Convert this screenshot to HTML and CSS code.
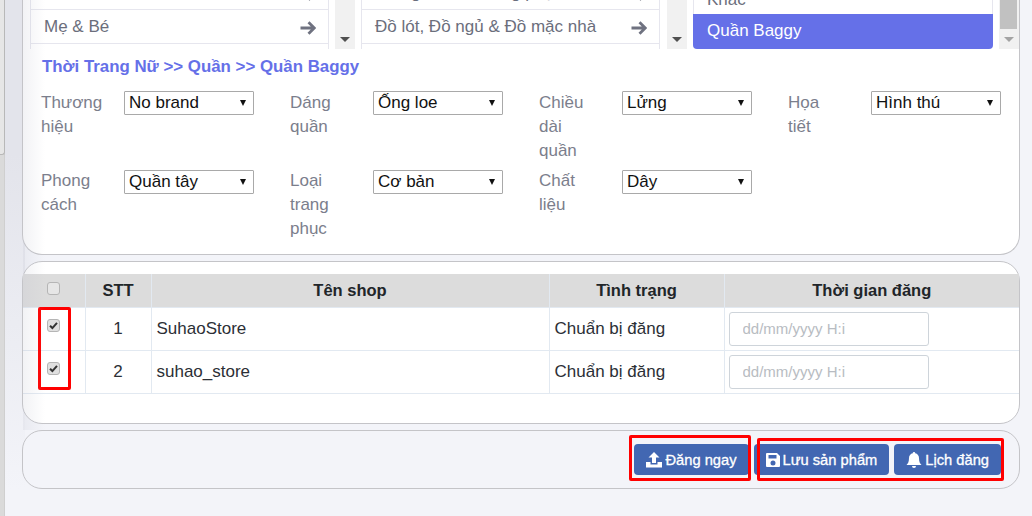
FILE: index.html
```html
<!DOCTYPE html>
<html lang="en">
<head>
    <meta charset="UTF-8">
    <meta name="viewport" content="width=device-width, initial-scale=1.0">
    <title>Đăng sản phẩm</title>
    <link rel="stylesheet" href="styles.css">
</head>
<body>
    <div class="side-strip"><div class="side-strip-top"></div></div>
    <div class="side-gap"></div>
    <div class="page">
        <!-- Category picker and attributes -->
        <section class="card card-top">
            <div class="pickers">
                <div class="picker">
                    <ul class="cat-list">
                        <li class="cat-item cat-cut"><span>Nhà cửa</span><svg class="arrow" viewBox="0 0 16 14"><path d="M.5 7H14M8.500 1.200L14.300 7l-5.800 5.800"/></svg></li>
                        <li class="cat-item"><span>Mẹ &amp; Bé</span><svg class="arrow" viewBox="0 0 16 14"><path d="M.5 7H14M8.500 1.200L14.300 7l-5.800 5.800"/></svg></li>
                        <li class="cat-item cat-last"></li>
                    </ul>
                    <div class="scroll"><i class="scroll-down"></i></div>
                </div>
                <div class="picker picker-mid">
                    <ul class="cat-list">
                        <li class="cat-item cat-cut"><span>Đồ ngủ &amp; Đồ Trang phục</span><svg class="arrow" viewBox="0 0 16 14"><path d="M.5 7H14M8.500 1.200L14.300 7l-5.800 5.800"/></svg></li>
                        <li class="cat-item"><span>Đồ lót, Đồ ngủ &amp; Đồ mặc nhà</span><svg class="arrow" viewBox="0 0 16 14"><path d="M.5 7H14M8.500 1.200L14.300 7l-5.800 5.800"/></svg></li>
                        <li class="cat-item cat-last"></li>
                    </ul>
                    <div class="scroll"><i class="scroll-down"></i></div>
                </div>
                <div class="picker picker-last">
                    <ul class="cat-list">
                        <li class="cat-plain">Khác</li>
                        <li class="cat-active">Quần Baggy</li>
                    </ul>
                    <div class="scroll scroll-thumb"><b></b><i class="scroll-down"></i></div>
                </div>
            </div>

            <h3 class="crumb">Thời Trang Nữ &gt;&gt; Quần &gt;&gt; Quần Baggy</h3>

            <div class="attrs">
                <div class="attr">
                    <label>Thương hiệu</label>
                    <div class="fake-select">No brand</div>
                </div>
                <div class="attr">
                    <label>Dáng quần</label>
                    <div class="fake-select">Ống loe</div>
                </div>
                <div class="attr">
                    <label>Chiều dài quần</label>
                    <div class="fake-select">Lửng</div>
                </div>
                <div class="attr">
                    <label>Họa tiết</label>
                    <div class="fake-select">Hình thú</div>
                </div>
                <div class="attr attr-low">
                    <label>Phong cách</label>
                    <div class="fake-select">Quần tây</div>
                </div>
                <div class="attr attr-low">
                    <label>Loại trang phục</label>
                    <div class="fake-select">Cơ bản</div>
                </div>
                <div class="attr attr-low">
                    <label>Chất liệu</label>
                    <div class="fake-select">Dây</div>
                </div>
            </div>
        </section>

        <!-- Shop table -->
        <section class="card card-table">
            <table class="shops">
                <thead>
                    <tr>
                        <th class="col-check"><span class="check"></span></th>
                        <th class="col-stt">STT</th>
                        <th class="col-name">Tên shop</th>
                        <th class="col-status">Tình trạng</th>
                        <th>Thời gian đăng</th>
                    </tr>
                </thead>
                <tbody>
                    <tr>
                        <td class="center"><span class="check checked"><svg viewBox="0 0 12 12"><path d="M2.200 6.200l2.600 2.600 5-5.600"/></svg></span></td>
                        <td class="center">1</td>
                        <td>SuhaoStore</td>
                        <td>Chuẩn bị đăng</td>
                        <td><input class="time-input" type="text" placeholder="dd/mm/yyyy H:i"></td>
                    </tr>
                    <tr>
                        <td class="center"><span class="check checked"><svg viewBox="0 0 12 12"><path d="M2.200 6.200l2.600 2.600 5-5.600"/></svg></span></td>
                        <td class="center">2</td>
                        <td>suhao_store</td>
                        <td>Chuẩn bị đăng</td>
                        <td><input class="time-input" type="text" placeholder="dd/mm/yyyy H:i"></td>
                    </tr>
                </tbody>
            </table>
            <div class="mark mark-checks"></div>
        </section>

        <!-- Actions -->
        <section class="card card-actions">
            <button class="btn btn-post">
                <svg class="icon" viewBox="0 0 16 16"><path d="M8 0l5.500 5.500H10V11H6V5.500H2.500zM0 10h4.500v2.500h7V10H16v5.500H0z"/></svg>Đăng ngay
            </button>
            <button class="btn btn-save">
                <svg class="icon" viewBox="1 1 14 14"><path d="M2 1h10l3 3v10a1 1 0 0 1-1 1H2a1 1 0 0 1-1-1V2a1 1 0 0 1 1-1zm1.500 2v3.500h8V3zM8 8.500a2.500 2.500 0 1 0 0 5 2.500 2.500 0 0 0 0-5z" fill-rule="evenodd"/></svg>Lưu sản phẩm
            </button>
            <button class="btn btn-plan">
                <svg class="icon" viewBox="0 0 16 16"><path d="M8 0a1.200 1.200 0 0 1 1.200 1.300C11.500 1.800 13 3.700 13 6c0 4 1 5.500 2.500 7H.5C2 11.500 3 10 3 6c0-2.300 1.500-4.200 3.800-4.700A1.200 1.200 0 0 1 8 0zM6 14h4a2 2 0 0 1-4 0z"/></svg>Lịch đăng
            </button>
            <div class="mark mark-post"></div>
            <div class="mark mark-save"></div>
        </section>
    </div>
    <div class="card-shade"></div>
</body>
</html>
```
FILE: styles.css
```css
* {
    box-sizing: border-box;
}
html, body {
    margin: 0;
    height: 516px;
    overflow: hidden;
}
body {
    background: #f3f4f9;
    font-family: "Liberation Sans", Arial, sans-serif;
    font-size: 17px;
    color: #212529;
    position: relative;
}

/* browser chrome left over on the left edge */
.side-strip {
    position: absolute;
    left: 0;
    top: 0;
    width: 5px;
    height: 516px;
    background: #dadada;
    border-right: 1px solid #cfcfcf;
}
.side-strip-top {
    width: 5px;
    height: 155px;
    background: #e6e6e6;
    border-right: 1px solid #b8b8b8;
    border-bottom: 1px solid #b8b8b8;
    border-bottom-right-radius: 3px;
}
.side-gap {
    position: absolute;
    left: 5px;
    top: 0;
    width: 20px;
    height: 516px;
    background: linear-gradient(to bottom, #e3e4eb 30%, #f3f4f9 95%);
}
.card-shade {
    position: absolute;
    left: 23px;
    top: 0;
    width: 22px;
    height: 430px;
    background: linear-gradient(to right, rgba(190, 192, 205, .2), rgba(190, 192, 205, 0));
    pointer-events: none;
}
.page {
    position: relative;
    padding-left: 22px;
    width: 1020px;
}

/* cards */
.card {
    background: #fff;
    border: 1px solid #c4c4c8;
    border-radius: 20px;
    position: relative;
    margin-bottom: 6px;
}
.card-top {
    height: 255px;
    border-top: 0;
    border-top-left-radius: 0;
    border-top-right-radius: 0;
    padding: 0 0 0 7px;
}
.card-table {
    height: 163px;
    padding-top: 12px;
}
.card-actions {
    height: 59px;
    background: #f3f4f9;
    display: flex;
    justify-content: flex-end;
    align-items: center;
    gap: 5px;
    padding-right: 18px;
}

/* category lists */
.pickers {
    display: flex;
    height: 49px;
    overflow: hidden;
}
.picker {
    display: flex;
    width: 331px;
    padding-right: 6px;
}
.picker-mid {
    width: 332px;
}
.picker-last {
    width: 326px;
    padding-right: 0;
}
.cat-list {
    list-style: none;
    margin: 0;
    padding: 0;
    flex: 1;
    display: flex;
    flex-direction: column;
    justify-content: flex-end;
    overflow: hidden;
    height: 49px;
}
.cat-item {
    flex: none;
    display: flex;
    justify-content: space-between;
    align-items: center;
    height: 34px;
    padding: 0 12px 0 13px;
    border: 1px solid #e6e6ee;
    border-top-width: 0;
    border-bottom-width: 1px;
    color: #6b6e7c;
}
.cat-cut {
    margin-top: -20px;
}
.cat-last {
    height: 5px;
    border-bottom: 0;
}
.arrow {
    width: 16px;
    height: 14px;
    fill: none;
    stroke: #6f7280;
    stroke-width: 2.800;
    margin-top: 3px;
}
.cat-plain {
    flex: none;
    height: 14px;
    color: #6b6e7c;
    padding-left: 13px;
    line-height: 0;
    border-left: 1px solid #e6e6ee;
    border-right: 1px solid #e6e6ee;
}
.cat-active {
    flex: none;
    height: 35px;
    background: #6570e8;
    color: #fff;
    border-radius: 0 0 4px 4px;
    padding: 7px 0 0 14px;
}
.scroll {
    flex: none;
    position: relative;
    width: 20px;
    margin-left: 6px;
    background: #f1f1f1;
}
.picker-mid .scroll {
    margin-left: 7px;
}
.scroll-thumb b {
    display: block;
    height: 29px;
    background: #c1c1c1;
    margin: 0 2px 0 1px;
}
.scroll-down {
    position: absolute;
    left: 5px;
    bottom: 7px;
    border: 5px solid transparent;
    border-top: 5px solid #505050;
    border-bottom: 0;
}
.scroll-thumb .scroll-down {
    border-top-color: #a3a3a3;
}

/* breadcrumb */
.crumb {
    margin: 8px 0 0 12px;
    font-size: 16.850px;
    line-height: 20px;
    font-weight: 700;
    color: #6570e8;
}

/* attribute grid */
.attrs {
    display: grid;
    grid-template-columns: repeat(4, 249px);
    margin: 14px 0 0 11px;
}
.attr {
    display: flex;
    align-items: flex-start;
    margin-bottom: 6px;
}
.attr label {
    width: 83px;
    flex: none;
    padding-right: 30px;
    line-height: 24px;
    color: #7b7e8c;
}
.fake-select {
    position: relative;
    width: 130px;
    height: 24px;
    border: 1px solid #a9a9a9;
    border-radius: 1px;
    background: #fff;
    color: #111;
    line-height: 22px;
    padding-left: 4px;
}
.attr-low .fake-select {
    margin-top: 1px;
}
.fake-select:after {
    content: "";
    position: absolute;
    right: 7px;
    top: 8px;
    border: 3.500px solid transparent;
    border-top: 6px solid #111;
    border-bottom: 0;
}

/* shop table */
.shops {
    width: 100%;
    border-collapse: collapse;
    table-layout: fixed;
}
.shops th {
    height: 33px;
    background: #dcdcdc;
    border: 1px solid #e2e9f1;
    border-width: 0 1px 1px 1px;
    font-size: 16.500px;
    color: #212529;
}
.shops td {
    height: 43px;
    border: 1px solid #e2e9f1;
    padding: 0 4px 0 5px;
    color: #2c2f36;
}
.shops td.center {
    padding: 0 4px;
}
.shops tr > :first-child {
    border-left: 0;
}
.shops tr > :last-child {
    border-right: 0;
}
.col-check {
    width: 62px;
}
.col-stt {
    width: 66px;
}
.col-name {
    width: 398px;
}
.col-status {
    width: 175px;
}
.center {
    text-align: center;
}
.check {
    display: inline-block;
    width: 13px;
    height: 13px;
    border: 1px solid #b5b5b5;
    border-radius: 3px;
    background: #e6e6e6;
    vertical-align: middle;
    position: relative;
    top: -3px;
}
.check svg {
    display: block;
    width: 11px;
    height: 11px;
    fill: none;
    stroke: #333;
    stroke-width: 2.200;
}
.checked {
    top: -4px;
    background: #e0e0e0;
}
.time-input {
    display: block;
    width: 200px;
    height: 34px;
    margin-left: -1px;
    border: 1px solid #ced4da;
    border-radius: 3px;
    padding: 0 13px;
    font-family: inherit;
    font-size: 15px;
}
.time-input::placeholder {
    color: #b8bcc2;
}

/* buttons */
.btn {
    display: flex;
    align-items: center;
    height: 31px;
    padding: 0 12px;
    background: #4267b2;
    color: #fff;
    border: 0;
    border-radius: 4px;
    font-family: inherit;
    font-size: 14.700px;
    -webkit-text-stroke: 0.3px #fff;
}
.btn .icon {
    width: 16px;
    height: 16px;
    margin-right: 3px;
    fill: #fff;
}
.btn-save .icon {
    width: 14px;
    height: 14px;
}

/* red annotation boxes drawn over the screenshot */
.mark {
    position: absolute;
    border: 3px solid #f00;
    border-radius: 2px;
    pointer-events: none;
}
.mark-checks {
    left: 15px;
    top: 45px;
    width: 33px;
    height: 83px;
}
.mark-post {
    left: 606px;
    top: 4px;
    width: 122px;
    height: 46px;
}
.mark-save {
    left: 734px;
    top: 7px;
    width: 247px;
    height: 43px;
}
```
